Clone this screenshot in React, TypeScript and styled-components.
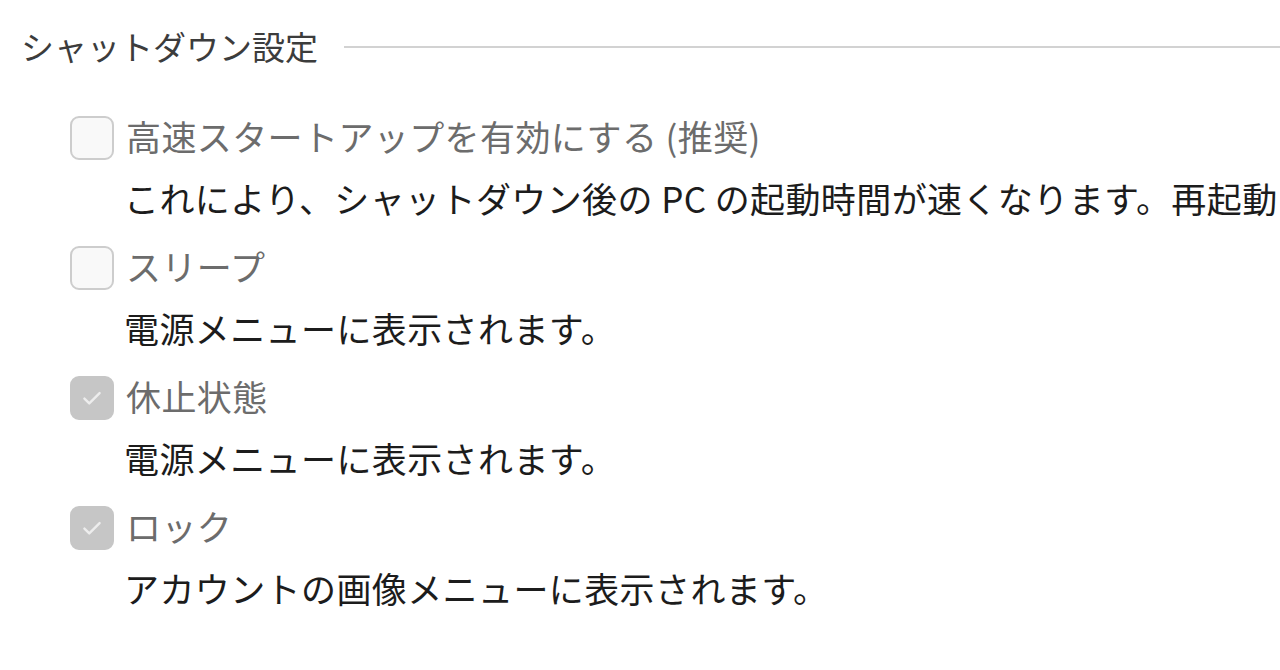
import React from "react";
import styled, { createGlobalStyle } from "styled-components";

const Global = createGlobalStyle`
  html, body { margin: 0; padding: 0; background: #ffffff; }
  body {
    font-family: "Noto Sans CJK JP", "Noto Sans", sans-serif;
    overflow: hidden;
  }
`;

const Page = styled.div`
  width: 1280px;
  height: 670px;
  overflow: hidden;
  padding-top: 25px;
  box-sizing: border-box;
`;

const HeadingRow = styled.div`
  display: flex;
  align-items: center;
  gap: 26px;
  padding-left: 21px;
  height: 44px;
`;

const Heading = styled.div`
  font-size: 33px;
  line-height: 44px;
  color: #3c3c3c;
  white-space: nowrap;
  padding-bottom: 2px;
`;

const Rule = styled.div`
  flex: 1;
  height: 2px;
  background: #d2d2d2;
`;

const List = styled.div`
  display: flex;
  flex-direction: column;
  gap: 26px;
  padding-left: 70px;
  margin-top: 47px;
`;

const Item = styled.div`
  display: flex;
  flex-direction: column;
`;

const OptionRow = styled.div`
  display: flex;
  align-items: center;
  gap: 12px;
  height: 44px;
`;

const Box = styled.div<{ $checked: boolean }>`
  width: 44px;
  height: 44px;
  box-sizing: border-box;
  border-radius: 9px;
  flex: none;
  display: flex;
  align-items: center;
  justify-content: center;
  background: ${(p) => (p.$checked ? "#c6c6c6" : "#f9f9f9")};
  border: 2px solid ${(p) => (p.$checked ? "#c6c6c6" : "#cdcdcd")};
`;

const Label = styled.div`
  font-size: 35px;
  line-height: 44px;
  color: #6c6c6c;
  white-space: nowrap;
  letter-spacing: 0.4px;
  margin-bottom: 5px;
`;

const Desc = styled.div`
  margin-top: 16px;
  margin-left: 54px;
  font-size: 35px;
  line-height: 44px;
  color: #1c1c1c;
  white-space: nowrap;
  letter-spacing: 0.4px;
`;

const Check = () => (
  <svg width="26" height="26" viewBox="0 0 24 24" fill="none">
    <path d="M5 12.5l4.5 4.5L19 7.5" stroke="#ededed" strokeWidth="2.2" strokeLinecap="round" strokeLinejoin="round" />
  </svg>
);

const items = [
  { label: "高速スタートアップを有効にする (推奨)", desc: "これにより、シャットダウン後の PC の起動時間が速くなります。再起動には影響しません。", checked: false },
  { label: "スリープ", desc: "電源メニューに表示されます。", checked: false },
  { label: "休止状態", desc: "電源メニューに表示されます。", checked: true },
  { label: "ロック", desc: "アカウントの画像メニューに表示されます。", checked: true },
];

export default function App() {
  return (
    <Page>
      <Global />
      <HeadingRow>
        <Heading>シャットダウン設定</Heading>
        <Rule />
      </HeadingRow>
      <List>
        {items.map((it) => (
          <Item key={it.label}>
            <OptionRow>
              <Box $checked={it.checked}>{it.checked && <Check />}</Box>
              <Label>{it.label}</Label>
            </OptionRow>
            <Desc>{it.desc}</Desc>
          </Item>
        ))}
      </List>
    </Page>
  );
}
